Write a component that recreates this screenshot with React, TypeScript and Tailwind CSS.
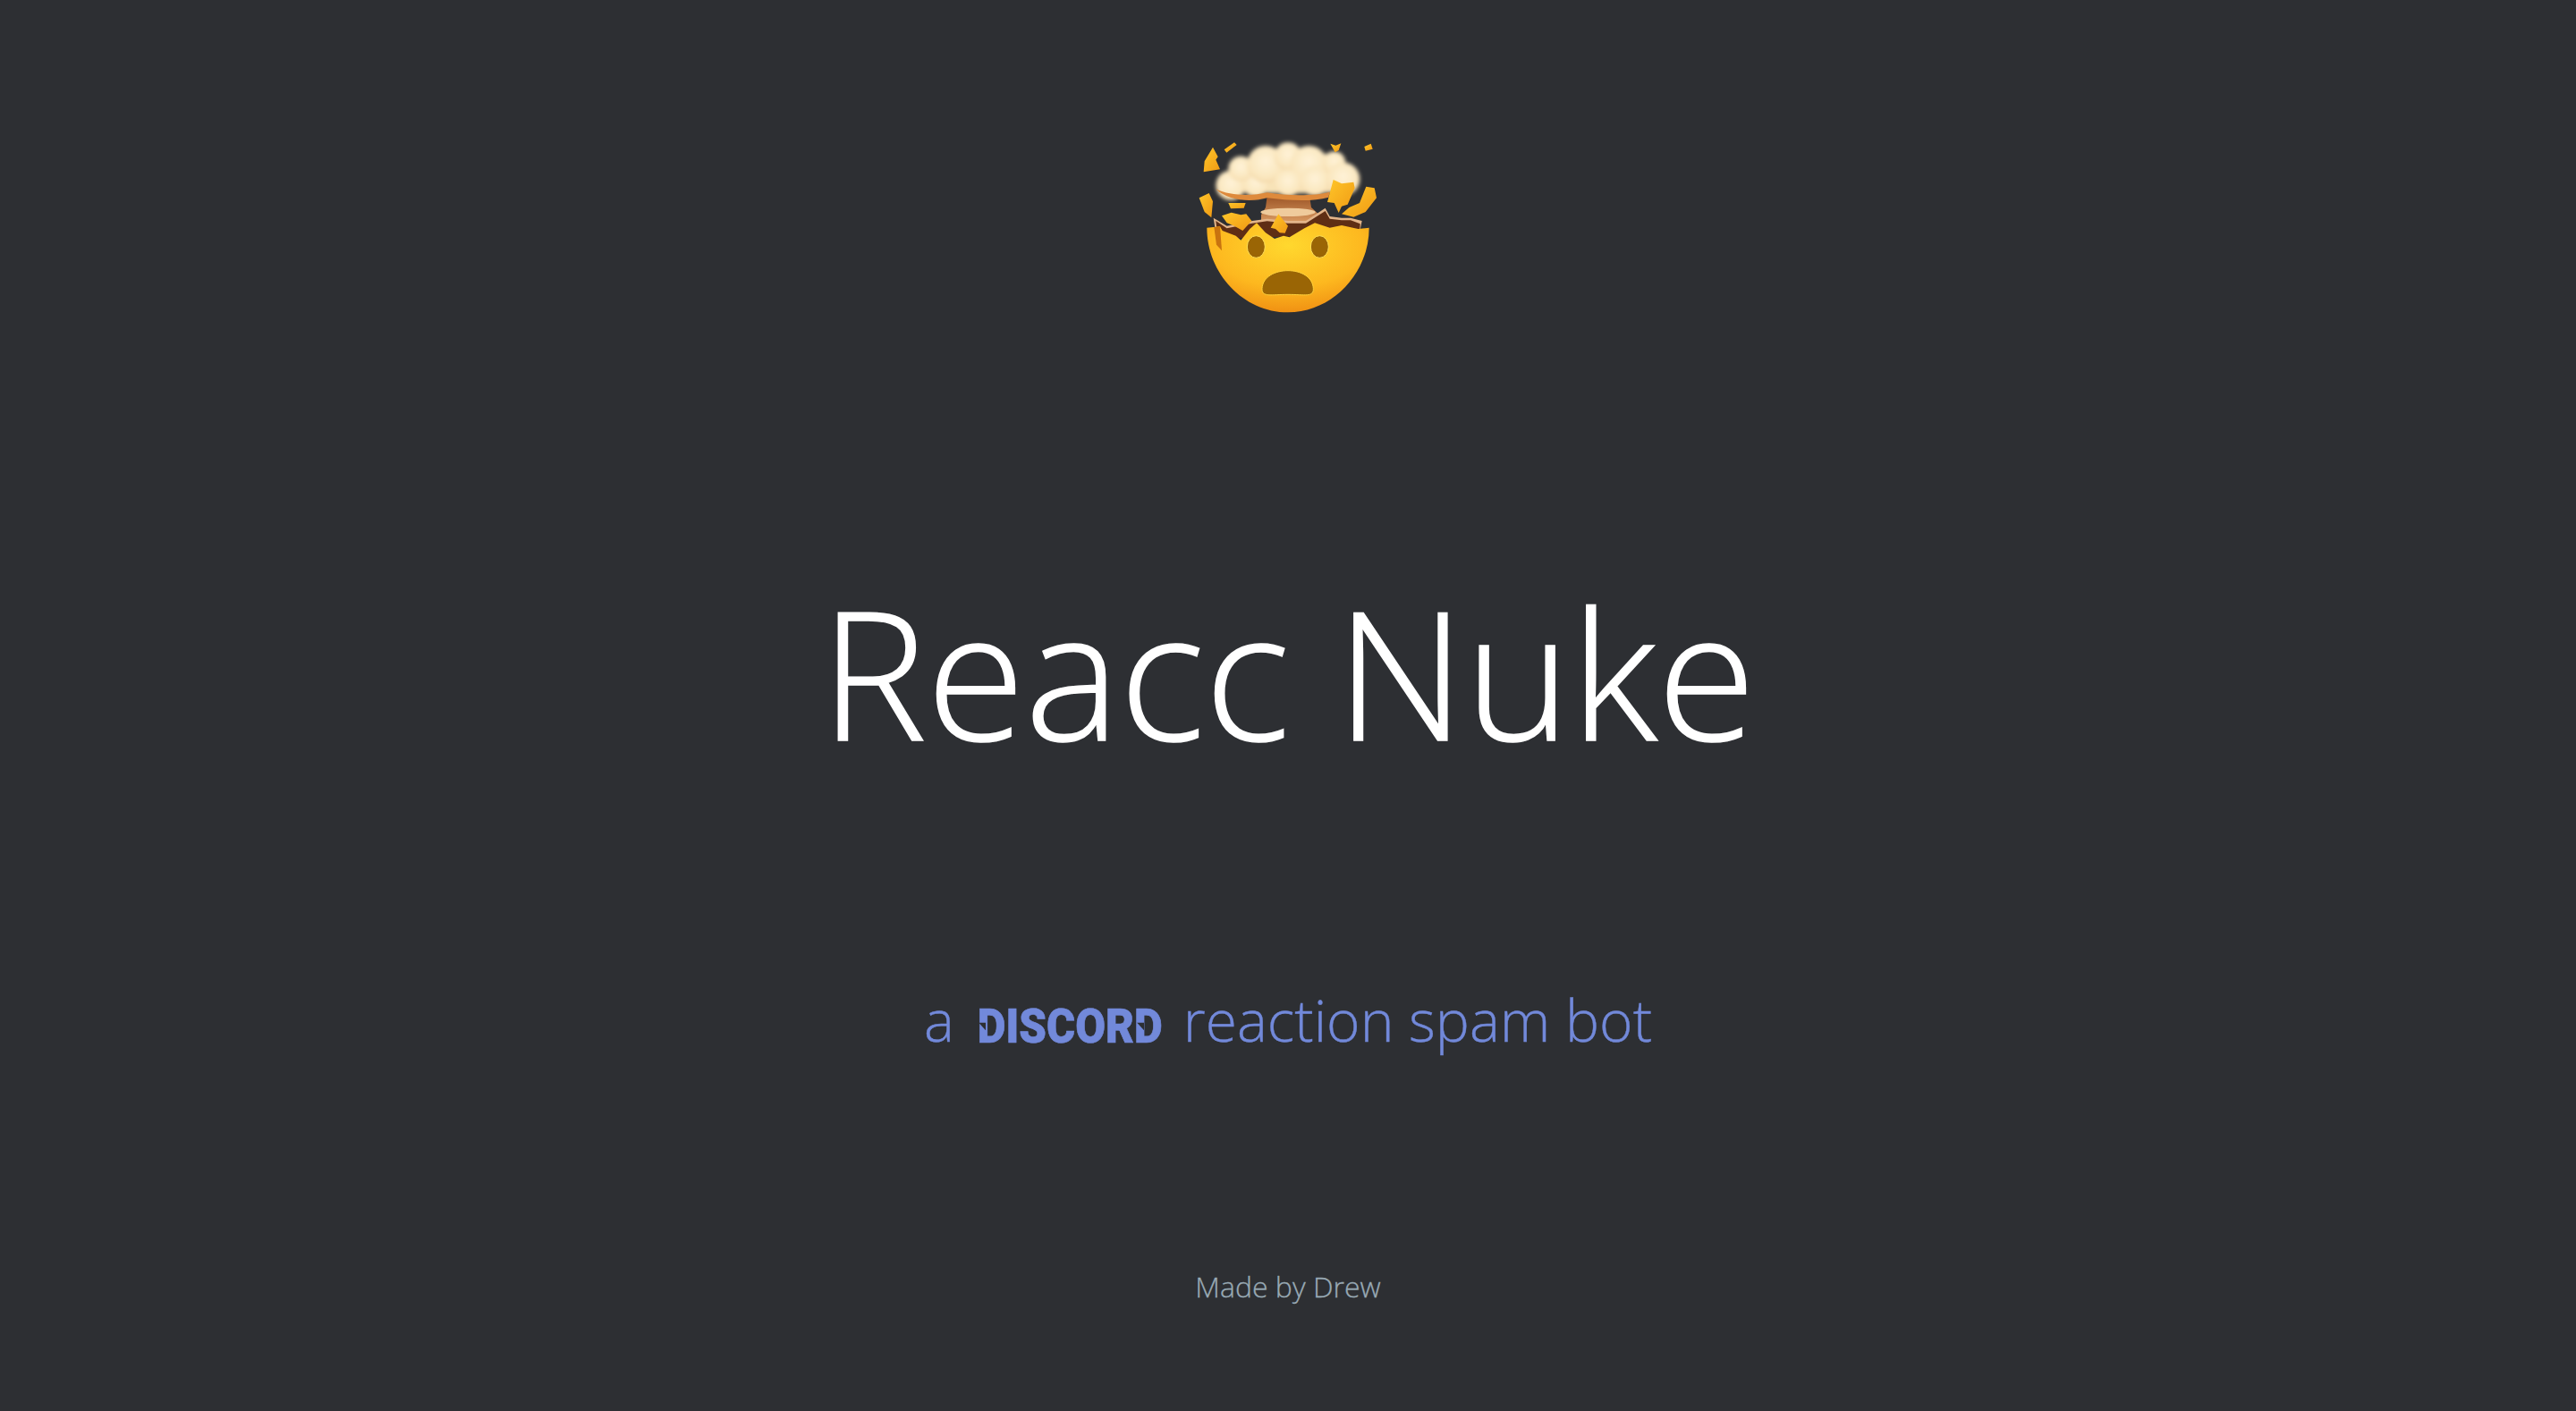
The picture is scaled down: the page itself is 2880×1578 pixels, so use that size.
const puffs = [
  [228, 226, 50], [312, 222, 44], [262, 170, 42], [345, 155, 62], [420, 128, 46],
  [490, 155, 62], [575, 150, 38], [420, 218, 46], [510, 212, 50], [605, 205, 56],
]

const shards = [
  '168,98 185,130 178,140 192,172 137,181 140,145',
  '206,106 240,82 248,90 214,116',
  '562,86 580,92 598,85 590,108 578,115',
  '676,96 698,86 704,104 680,110',
  '122,268 155,252 168,280 163,334 140,315',
  '572,207 600,220 640,215 644,235 620,290 600,296 590,318 575,285 552,282',
  '682,230 710,235 717,268 680,315 640,332 600,322 625,300 660,285',
  '198,328 230,317 262,325 280,322 298,345 268,378 240,362 215,352',
  '362,368 388,322 420,362 410,386 392,385 378,372',
  '220,285 278,285 272,302 228,304',
]

function MindBlownEmoji() {
  return (
    <svg viewBox="0 0 840 720" className="h-[240px] w-[280px]">
      <defs>
        <radialGradient id="puff" cx="50%" cy="42%" r="62%">
          <stop offset="0%" stopColor="#fff3d8" />
          <stop offset="75%" stopColor="#fae6bd" />
          <stop offset="100%" stopColor="#efcf9c" />
        </radialGradient>
        <linearGradient id="stem" x1="0" x2="0" y1="0" y2="1">
          <stop offset="0%" stopColor="#9c5526" />
          <stop offset="100%" stopColor="#d99a62" />
        </linearGradient>
        <radialGradient id="face" cx="50%" cy="25%" r="78%">
          <stop offset="0%" stopColor="#ffd82e" />
          <stop offset="60%" stopColor="#fdb81f" />
          <stop offset="100%" stopColor="#ef8d12" />
        </radialGradient>
        <linearGradient id="shard" x1="0" x2="1" y1="0" y2="1">
          <stop offset="0%" stopColor="#ffc629" />
          <stop offset="100%" stopColor="#f09a14" />
        </linearGradient>
        <filter id="soft" x="-10%" y="-10%" width="120%" height="120%">
          <feGaussianBlur stdDeviation="6" />
        </filter>
      </defs>

      <path d="M350 262 L492 262 L498 300 L525 325 L525 350 L330 350 L330 325 L345 300 Z" fill="url(#stem)" />
      <ellipse cx="420" cy="316" rx="92" ry="14" fill="#efcb9c" />
      <g filter="url(#soft)">
        <path d="M190 245 L250 150 L420 95 L590 130 L655 210 L640 245 C540 255 300 255 190 245 Z" fill="#f8e3b8" />
        {puffs.map(([cx, cy, r]) => (
          <circle key={`${cx}-${cy}`} cx={cx} cy={cy} r={r} fill="url(#puff)" />
        ))}
      </g>
      <path
        d="M178 238 C225 262 300 262 350 250 C420 262 510 262 560 248 L556 266 C500 282 420 276 350 268 C300 282 220 280 178 238 Z"
        fill="#de8a3c"
      />

      <path
        d="M170 335 L215 362 L300 345 L350 338 L420 345 L480 345 L545 302 L560 330 L600 335 L630 335 L668 345 L660 385 L180 400 Z"
        fill="#e3b58a"
      />
      <path
        d="M178 345 L215 370 L300 353 L350 346 L420 353 L480 353 L545 312 L560 338 L600 343 L630 343 L662 355 L660 390 L185 405 Z"
        fill="#5f2e14"
      />
      <path
        d="M148 368 L192 364 L200 378 L245 395 L262 410 L292 372 L315 352 L345 385 L375 405 L405 395 L425 400 L475 370 L510 352 L560 368 L600 360 L655 372 L692 368 C692 520 570 652 420 652 C270 652 148 520 148 368 Z"
        fill="url(#face)"
      />
      <path d="M172 366 L192 364 L198 445 L180 425 Z" fill="#c8730f" />
      <ellipse cx="313" cy="432" rx="30" ry="37" fill="#9a6505" stroke="#ffe05a" strokeWidth="3" />
      <ellipse cx="526" cy="432" rx="30" ry="37" fill="#9a6505" stroke="#ffe05a" strokeWidth="3" />
      <path
        d="M333 572 C335 532 378 512 420 512 C462 512 503 532 505 572 C506 602 478 592 420 592 C362 592 332 602 333 572 Z"
        fill="#9a6505"
        stroke="#ffd23c"
        strokeWidth="3"
      />
      {shards.map((points) => (
        <polygon key={points} points={points} fill="url(#shard)" />
      ))}
    </svg>
  )
}

function App() {
  return (
    <div className="flex h-[1578px] flex-col items-center bg-[#2d2f33] pt-[132px] font-['Open_Sans',sans-serif] font-light">
      <MindBlownEmoji />

      <h1 className="mt-[243px] text-[200px] leading-[272px] font-light text-white [-webkit-text-stroke:1.5px_#fff]">
        Reacc Nuke
      </h1>

      <div className="mt-[210px] flex items-center text-[64px] leading-[87px] text-[#7289da] [-webkit-text-stroke:0.4px_#7289da]">
        <span>a</span>
        <span className="relative mr-[24px] ml-[26px] w-[206px] translate-y-[8px] scale-y-[1.09] text-center font-['Roboto',sans-serif] text-[49px] font-black whitespace-nowrap [-webkit-text-stroke:0.6px_#7289da]">
          DISCORD
          <svg viewBox="0 0 8 8" className="absolute top-[39px] left-[1px] h-[8px] w-[8px]">
            <polygon points="0,0 8,0 8,8" fill="#2d2f33" />
          </svg>
          <svg viewBox="0 0 8 8" className="absolute top-[39px] left-[178px] h-[8px] w-[8px]">
            <polygon points="0,0 8,0 8,8" fill="#2d2f33" />
          </svg>
        </span>
        <span>reaction spam bot</span>
      </div>

      <p className="mt-[233px] text-[32px] leading-[44px] text-[#99aab5] [-webkit-text-stroke:0.3px_#99aab5]">
        Made by Drew
      </p>
    </div>
  )
}

export default App
